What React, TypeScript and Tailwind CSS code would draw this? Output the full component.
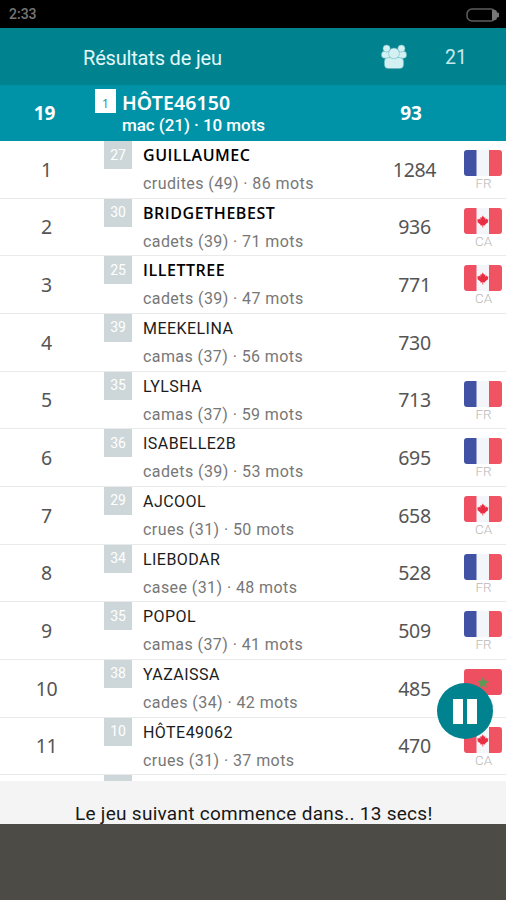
import React from "react";

type Player = {
  rank: number;
  level: number;
  name: string;
  detail: string;
  score: number;
  country?: "FR" | "CA" | "MA";
};

const players: Player[] = [
  { rank: 1, level: 27, name: "GUILLAUMEC", detail: "crudites (49) · 86 mots", score: 1284, country: "FR" },
  { rank: 2, level: 30, name: "BRIDGETHEBEST", detail: "cadets (39) · 71 mots", score: 936, country: "CA" },
  { rank: 3, level: 25, name: "ILLETTREE", detail: "cadets (39) · 47 mots", score: 771, country: "CA" },
  { rank: 4, level: 39, name: "MEEKELINA", detail: "camas (37) · 56 mots", score: 730 },
  { rank: 5, level: 35, name: "LYLSHA", detail: "camas (37) · 59 mots", score: 713, country: "FR" },
  { rank: 6, level: 36, name: "ISABELLE2B", detail: "cadets (39) · 53 mots", score: 695, country: "FR" },
  { rank: 7, level: 29, name: "AJCOOL", detail: "crues (31) · 50 mots", score: 658, country: "CA" },
  { rank: 8, level: 34, name: "LIEBODAR", detail: "casee (31) · 48 mots", score: 528, country: "FR" },
  { rank: 9, level: 35, name: "POPOL", detail: "camas (37) · 41 mots", score: 509, country: "FR" },
  { rank: 10, level: 38, name: "YAZAISSA", detail: "cades (34) · 42 mots", score: 485, country: "MA" },
  { rank: 11, level: 10, name: "HÔTE49062", detail: "crues (31) · 37 mots", score: 470, country: "CA" },
];

function Flag({ country }: { country: "FR" | "CA" | "MA" }) {
  const id = React.useId();
  return (
    <svg width="38" height="26" viewBox="0 0 38 26" className="block">
      <clipPath id={id}>
        <rect width="38" height="26" rx="3" />
      </clipPath>
      <g clipPath={`url(#${id})`}>
        {country === "MA" ? (
          <>
            <rect width="38" height="26" fill="#ee5061" />
            <path d="M19 7.5l1.7 4.2 4.4.3-3.4 2.8 1.1 4.3-3.8-2.4-3.8 2.4 1.1-4.3-3.4-2.8 4.4-.3z" fill="#5d9a57" />
          </>
        ) : (
          <>
            <rect width="38" height="26" fill="#f3f5f9" />
            <rect width="12.5" height="26" fill={country === "FR" ? "#4152a5" : "#ee5061"} />
            <rect x="25" width="13" height="26" fill="#f05362" />
            {country === "CA" && (
              <path d="M18.8 7.5l1.3 2.3 1.3-.6-.3 2.6 1.5-1.2.5 1 1.4-.1-.7 2 .6.6-3.3 2.3.2 1.1-2.1-.2v2.2h-.8v-2.2l-2.1.2.2-1.1-3.3-2.3.6-.6-.7-2 1.4.1.5-1 1.5 1.2-.3-2.6 1.3.6z" fill="#e92d43" />
            )}
          </>
        )}
      </g>
    </svg>
  );
}

function PeopleIcon() {
  return (
    <svg width="26" height="26" viewBox="0 0 26 26" fill="#d3f0f3" stroke="#5fb3bb" strokeWidth="0.5">
      <rect x="0.5" y="7.2" width="9.4" height="7" rx="3" />
      <rect x="16.1" y="7.2" width="9.4" height="7" rx="3" />
      <circle cx="5.6" cy="4.5" r="3.6" />
      <circle cx="20.4" cy="4.5" r="3.6" />
      <rect x="3.4" y="13.6" width="19.2" height="11" rx="4" />
      <circle cx="13" cy="9.4" r="5.4" />
    </svg>
  );
}

function Row({ player }: { player: Player }) {
  return (
    <li className="flex h-[57.66px] shrink-0 border-b border-[#e9ebeb] bg-white">
      <div className="flex w-[93px] items-center justify-center font-['Noto_Sans',sans-serif] text-[19.5px] tracking-[-0.3px] text-[#555]">{player.rank}</div>
      <div className="ml-[11px] flex h-7 w-7 items-center justify-center bg-[#cdd7d9] font-['Roboto',sans-serif] text-[14px] text-white">{player.level}</div>
      <div className="ml-[11px] w-[215px] whitespace-nowrap font-['Roboto',sans-serif]">
        {player.rank <= 3 ? (
          <div className="h-[29px] pt-[4px] font-['Open_Sans',sans-serif] text-[16px] leading-[20px] font-semibold tracking-[0.55px] text-black">{player.name}</div>
        ) : (
          <div className="h-[29px] pt-[5px] text-[16px] leading-[20px] tracking-[0.45px] text-[#1c1c1c]">{player.name}</div>
        )}
        <div className="pt-[4px] text-[16px] leading-[20px] tracking-[0.42px] text-[#777]">{player.detail}</div>
      </div>
      <div className="flex w-[113px] items-center justify-center font-['Noto_Sans',sans-serif] text-[19.5px] tracking-[-0.3px] text-[#555]">{player.score}</div>
      {player.country && (
        <div className="-ml-[7px] flex w-[38px] flex-col items-center pt-[9px]">
          <Flag country={player.country} />
          <span className="pl-px font-['Roboto',sans-serif] text-[13.5px] leading-[14px] font-light text-[#b8b8b8]">{player.country}</span>
        </div>
      )}
    </li>
  );
}

export default function App() {
  return (
    <main className="relative flex h-[900px] w-[506px] flex-col overflow-hidden bg-[#4c4b46] font-['Roboto',sans-serif]">
      <div className="flex h-[28px] shrink-0 items-center justify-between bg-black pt-px pr-[6px] pl-[9px]">
        <span className="text-[14px] font-medium text-[#777]">2:33</span>
        <svg width="34" height="14" viewBox="0 0 34 14">
          <rect x="1" y="1" width="29" height="12" rx="5" fill="none" stroke="#5e5e5e" strokeWidth="1.5" />
          <path d="M26 2h3q2 0 2 2.5l2 .5v4l-2 .5Q31 12 29 12h-3z" fill="#777" />
        </svg>
      </div>
      <header className="flex h-[57px] shrink-0 items-center bg-[#00838f] pl-[83px] text-[20px] text-[#e2f8fa]">
        <h1 className="w-[298px] pt-[2px] text-[20px] tracking-[-0.18px]">Résultats de jeu</h1>
        <PeopleIcon />
        <span className="ml-[38px] pt-[2px] text-[19.5px] text-[#c7e9ec]">21</span>
      </header>
      <section className="flex h-[56px] shrink-0 bg-[#0093a8] font-['Noto_Sans',sans-serif] text-white">
        <div className="flex w-[89px] items-center justify-center text-[19px] font-bold">19</div>
        <div className="mt-[4px] ml-[6px] flex h-6 w-[21px] items-center justify-center bg-white pt-[5px] text-[12px] text-[#2b91a0]">1</div>
        <div className="ml-[6px] w-[233px] whitespace-nowrap">
          <div className="pt-[6px] text-[19.5px] leading-[24px] font-semibold tracking-[0.1px]">HÔTE46150</div>
          <div className="font-['Roboto',sans-serif] text-[17px] leading-[20px] font-medium tracking-[-0.05px]">mac (21) · 10 mots</div>
        </div>
        <div className="flex w-[112px] items-center justify-center text-[19px] font-bold">93</div>
      </section>
      <ul className="flex h-[640px] shrink-0 flex-col overflow-hidden bg-white">
        {players.map((p) => (
          <Row key={p.rank} player={p} />
        ))}
        <li className="h-7 shrink-0 pl-[104px]">
          <div className="h-7 w-7 bg-[#cdd7d9]" />
        </li>
      </ul>
      <footer className="h-[43px] shrink-0 overflow-hidden bg-[#f4f4f4] pt-[21px] pl-[75px] text-[19px] leading-[24px] tracking-[0.28px] whitespace-nowrap text-[#171717]">
        Le jeu suivant commence dans.. 13 secs!
      </footer>
      <button aria-label="Pause" className="absolute top-[683px] left-[437px] flex h-14 w-14 items-center justify-center gap-[4px] rounded-full bg-[#00838f]">
        <span className="h-[25px] w-[10px] bg-white" />
        <span className="h-[25px] w-[10px] bg-white" />
      </button>
    </main>
  );
}
